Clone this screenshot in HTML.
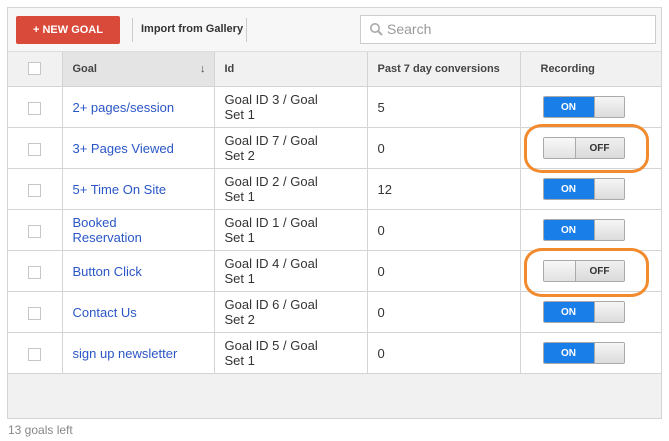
<!DOCTYPE html>
<html><head><style>
body{margin:0;width:669px;height:441px;background:#fff;font-family:"Liberation Sans",Arial,sans-serif;position:relative;overflow:hidden}
.a{position:absolute}
.panel{left:7px;top:7px;width:653px;height:410px;border:1px solid #d4d4d4;background:#f1f1f1}
.tb{left:8px;top:8px;width:653px;height:43px;background:#f7f7f7;border-bottom:1px solid #ddd}
.btn{left:16px;top:16px;width:104px;height:28px;background:#d94a3a;border-radius:2px;color:#fff;font-size:11px;font-weight:bold;line-height:28px;text-align:center}
.sep{width:1px;height:24px;background:#ccc;top:18px}
.imp{left:141px;top:23px;font-size:11px;font-weight:bold;color:#333}
.search{left:360px;top:15px;width:294px;height:27px;border:1px solid #ccc;background:#fff;color:#999;font-size:14px;line-height:27px}
table{position:absolute;left:8px;top:52px;border-collapse:collapse;width:653px;font-size:13px}
td,th{border:1px solid #d4d4d4;padding:0 0 0 10px;height:40px;text-align:left;vertical-align:middle;background:#fff;color:#333;line-height:15px}
th{height:34px;background:#f1f1f1;font-size:11px;font-weight:bold;color:#444;border-top:none}
tr td:first-child,tr th:first-child{border-left:none;padding:0;text-align:center}
tr td:last-child,tr th:last-child{border-right:none}
.cb{display:inline-block;width:11px;height:11px;border:1px solid #c6c6c6;background:#fff;vertical-align:middle}
a{color:#2a56c6;text-decoration:none}
.tg{display:inline-flex;width:80px;height:20px;border:1px solid #aaa;border-radius:2px;vertical-align:middle;margin-left:12px;overflow:hidden;font-size:10px;font-weight:bold}
.tg b,.tg i{display:flex;align-items:center;justify-content:center;height:20px;font-style:normal}
.on b{width:50px;background:#1a7ee8;color:#fff}
.on i{flex:1;background:linear-gradient(#f6f6f6,#dcdcdc);border-left:1px solid #aaa}
.off b{width:31px;border-right:1px solid #aaa;background:linear-gradient(#f8f8f8,#e2e2e2)}
.off i{flex:1;background:linear-gradient(#f0f0f0,#dadada);color:#333}
.ring{border:3px solid #f28a2e;border-radius:18px/16px;width:119px;height:43px}
</style></head><body>
<div class="a panel"></div>
<div class="a tb"></div>
<div class="a btn">+ NEW GOAL</div>
<div class="a sep" style="left:132px"></div>
<div class="a imp">Import from Gallery</div>
<div class="a sep" style="left:246px"></div>
<div class="a search"><svg width="14" height="14" style="margin:0 4px 0 8px;vertical-align:-2px" viewBox="0 0 14 14"><circle cx="6" cy="6" r="4.2" fill="none" stroke="#aaa" stroke-width="1.6"/><path d="M9 9l4 4" stroke="#aaa" stroke-width="2"/></svg>Search</div>
<table>
<colgroup><col style="width:54px"><col style="width:152px"><col style="width:153px"><col style="width:153px"><col></colgroup>
<tr><th><span class="cb"></span></th><th style="background:#e4e4e4">Goal<span style="float:right;margin-right:8px">&#8595;</span></th><th>Id</th><th>Past 7 day conversions</th><th style="padding-left:20px">Recording</th></tr>
<tr><td><span class="cb"></span></td><td><a>2+ pages/session</a></td><td>Goal ID 3 / Goal<br>Set 1</td><td>5</td><td><span class="tg on"><b>ON</b><i></i></span></td></tr>
<tr><td><span class="cb"></span></td><td><a>3+ Pages Viewed</a></td><td>Goal ID 7 / Goal<br>Set 2</td><td>0</td><td><span class="tg off"><b></b><i>OFF</i></span></td></tr>
<tr><td><span class="cb"></span></td><td><a>5+ Time On Site</a></td><td>Goal ID 2 / Goal<br>Set 1</td><td>12</td><td><span class="tg on"><b>ON</b><i></i></span></td></tr>
<tr><td><span class="cb"></span></td><td><a>Booked<br>Reservation</a></td><td>Goal ID 1 / Goal<br>Set 1</td><td>0</td><td><span class="tg on"><b>ON</b><i></i></span></td></tr>
<tr><td><span class="cb"></span></td><td><a>Button Click</a></td><td>Goal ID 4 / Goal<br>Set 1</td><td>0</td><td><span class="tg off"><b></b><i>OFF</i></span></td></tr>
<tr><td><span class="cb"></span></td><td><a>Contact Us</a></td><td>Goal ID 6 / Goal<br>Set 2</td><td>0</td><td><span class="tg on"><b>ON</b><i></i></span></td></tr>
<tr><td><span class="cb"></span></td><td><a>sign up newsletter</a></td><td>Goal ID 5 / Goal<br>Set 1</td><td>0</td><td><span class="tg on"><b>ON</b><i></i></span></td></tr>
</table>
<div class="a ring" style="left:524px;top:124px"></div>
<div class="a ring" style="left:524px;top:248px"></div>
<div class="a" style="left:8px;top:423px;font-size:12px;color:#888">13 goals left</div>
</body></html>
